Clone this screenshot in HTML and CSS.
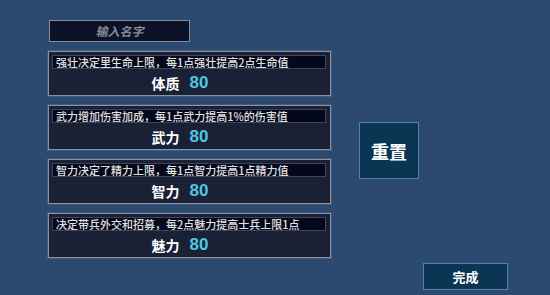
FILE: index.html
```html
<!DOCTYPE html>
<html>
<head>
    <meta name="viewport" content="width=device-width, initial-scale=1.0">
    <title>角色属性</title>
    <link rel="stylesheet" href="styles.css">
</head>
<body>
    <div class="screen">
        <div class="main-row">
            <div class="stat-column">
                <div class="name-box">输入名字</div>

                <div class="stat-panel">
                    <div class="stat-desc">强壮决定里生命上限，每1点强壮提高2点生命值</div>
                    <div class="stat-line">
                        <span class="stat-name">体质</span>
                        <span class="stat-value">80</span>
                    </div>
                </div>

                <div class="stat-panel">
                    <div class="stat-desc">武力增加伤害加成，每1点武力提高1%的伤害值</div>
                    <div class="stat-line">
                        <span class="stat-name">武力</span>
                        <span class="stat-value">80</span>
                    </div>
                </div>

                <div class="stat-panel">
                    <div class="stat-desc">智力决定了精力上限，每1点智力提高1点精力值</div>
                    <div class="stat-line">
                        <span class="stat-name">智力</span>
                        <span class="stat-value">80</span>
                    </div>
                </div>

                <div class="stat-panel">
                    <div class="stat-desc">决定带兵外交和招募，每2点魅力提高士兵上限1点</div>
                    <div class="stat-line">
                        <span class="stat-name">魅力</span>
                        <span class="stat-value">80</span>
                    </div>
                </div>
            </div>

            <button class="reset-btn">重置</button>
        </div>

        <div class="footer">
            <button class="done-btn">完成</button>
        </div>
    </div>
</body>
</html>
```

FILE: styles.css
```css
body {
    margin: 0px;
    background-color: #2c4a6f;
    font-family: "Noto Sans CJK SC", "Noto Sans", sans-serif;
    color: white;
}
.screen {
    width: 550px;
    height: 295px;
    overflow: hidden;
}
.main-row {
    display: flex;
    align-items: flex-start;
    padding-top: 20px;
    padding-left: 48px;
}
.stat-column {
    display: flex;
    flex-direction: column;
    width: 283px;
}
.name-box {
    width: 139px;
    height: 20px;
    margin-left: 1px;
    margin-bottom: 9px;
    background-color: #0c1328;
    border: 1px solid #7f8ca2;
    color: #868b99;
    font-size: 12px;
    font-weight: bold;
    font-style: italic;
    line-height: 20px;
    text-align: center;
}
.stat-panel {
    box-sizing: border-box;
    height: 45px;
    margin-bottom: 9px;
    padding: 3px 4px 0px 3px;
    background-color: #1a2134;
    border: 1px solid #8593a8;
    box-shadow: 0 0 0 1px #465a76;
}
.stat-desc {
    height: 12px;
    padding-left: 3px;
    background-color: #05081a;
    border: 1px solid #3a465e;
    color: #e0e0e0;
    font-size: 11px;
    font-weight: 500;
    line-height: 12px;
    white-space: nowrap;
    overflow: hidden;
}
.stat-line {
    display: flex;
    justify-content: center;
    align-items: center;
    gap: 10px;
    height: 28px;
    padding-right: 18px;
}
.stat-name {
    font-size: 14px;
    font-weight: bold;
}
.stat-value {
    font-family: "Liberation Sans", Arial, sans-serif;
    font-size: 17px;
    font-weight: bold;
    color: #4ec6e6;
}
.reset-btn {
    width: 60px;
    height: 57px;
    margin-left: 28px;
    margin-top: 102px;
    background-color: #0b3552;
    border: 1px solid #4f86a6;
    color: white;
    font-family: inherit;
    font-size: 18px;
    font-weight: bold;
    cursor: pointer;
}
.footer {
    display: flex;
    justify-content: flex-end;
    padding-right: 42px;
    margin-top: -4px;
}
.done-btn {
    width: 85px;
    height: 27px;
    background-color: #0b3552;
    border: 1px solid #4f86a6;
    color: white;
    font-family: inherit;
    font-size: 13px;
    font-weight: bold;
    cursor: pointer;
}
```
